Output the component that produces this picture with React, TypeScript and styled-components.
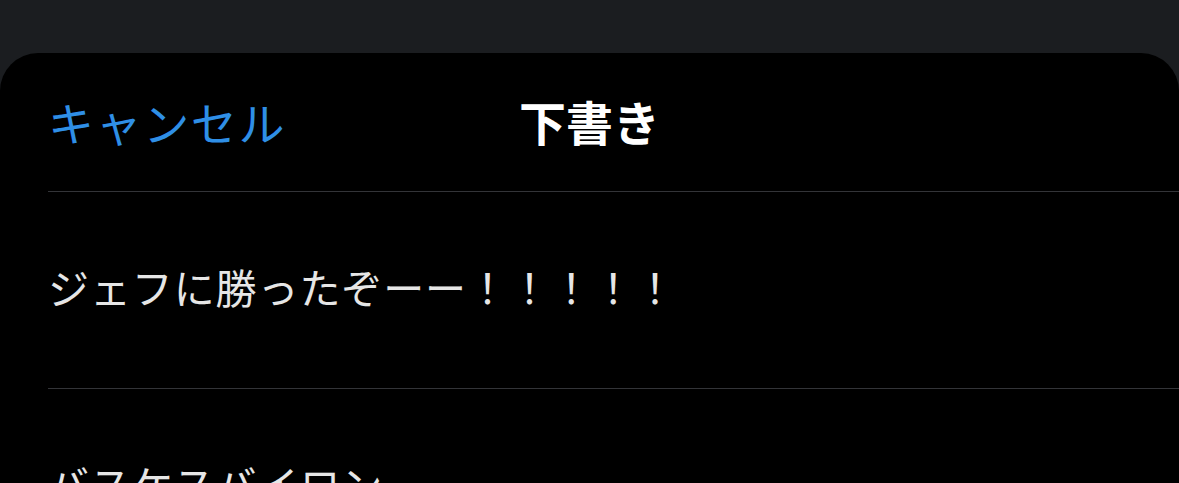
import React from "react";
import styled, { createGlobalStyle } from "styled-components";

const GlobalStyle = createGlobalStyle`
  html, body {
    margin: 0;
    padding: 0;
    background: #1b1d20;
    overflow: hidden;
  }
  body {
    font-family: "Noto Sans CJK JP", "Noto Sans", sans-serif;
  }
`;

const Page = styled.div`
  width: 1179px;
  height: 483px;
  padding-top: 53px;
  box-sizing: border-box;
  overflow: hidden;
`;

const Sheet = styled.div`
  background: #000;
  border-radius: 38px 38px 0 0;
  min-height: 600px;
`;

const Header = styled.header`
  margin-left: 48px;
  padding: 44px 48px 47px 0;
  display: grid;
  grid-template-columns: 1fr auto 1fr;
  align-items: center;
  border-bottom: 1px solid #333438;
`;

const CancelButton = styled.button`
  justify-self: start;
  background: none;
  border: 0;
  padding: 0;
  margin: 0;
  font: inherit;
  font-size: 46px;
  line-height: 46px;
  letter-spacing: 1.6px;
  color: #2f8fe6;
  cursor: pointer;
`;

const Title = styled.h1`
  margin: 0;
  font-size: 47px;
  line-height: 47px;
  font-weight: 700;
  color: #fff;
`;

const DraftList = styled.ul`
  list-style: none;
  margin: 0 0 0 48px;
  padding: 0;
`;

const DraftRow = styled.li`
  padding: 74px 0 81px;
  font-size: 41px;
  line-height: 41px;
  letter-spacing: 0.9px;
  color: #e6e6e6;
  border-bottom: 1px solid #333438;
  white-space: nowrap;
`;

const drafts = ["ジェフに勝ったぞーー！！！！！", "バスケスバイロン"];

export default function App() {
  return (
    <Page>
      <GlobalStyle />
      <Sheet>
        <Header>
          <CancelButton>キャンセル</CancelButton>
          <Title>下書き</Title>
          <span />
        </Header>
        <DraftList>
          {drafts.map((d) => (
            <DraftRow key={d}>{d}</DraftRow>
          ))}
        </DraftList>
      </Sheet>
    </Page>
  );
}
